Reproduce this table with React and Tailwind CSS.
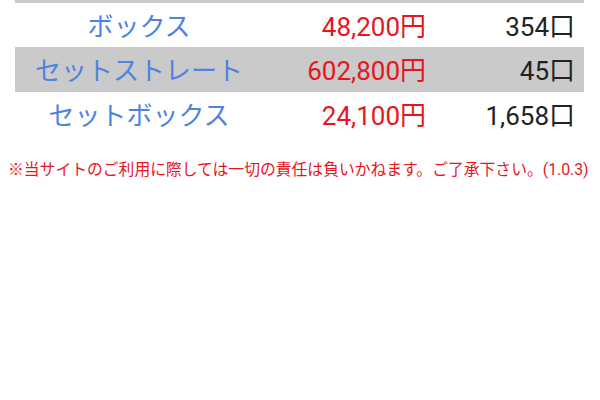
import React from "react";

const rows = [
  { name: "ボックス", price: "48,200円", count: "354口", gray: false },
  { name: "セットストレート", price: "602,800円", count: "45口", gray: true },
  { name: "セットボックス", price: "24,100円", count: "1,658口", gray: false },
];

const App = () => {
  return (
    <div
      className="w-[600px] h-[400px] bg-white overflow-hidden"
      style={{ fontFamily: 'Roboto, "Noto Sans CJK JP", sans-serif' }}
    >
      <div className="px-[15px] pr-[16px]">
        {/* 前の行の端 */}
        <div className="h-[3px] bg-[#cacaca]" />
        {rows.map((r) => (
          <div
            key={r.name}
            className={`flex items-center pt-[3px] text-[26px] leading-none ${
              r.gray ? "bg-[#cacaca] h-[45px]" : "h-[44px]"
            }`}
          >
            <div className="w-[248px] text-center text-[#4d83e3]">
              {r.name}
            </div>
            <div className="w-[163px] text-right text-[#e8141e]">{r.price}</div>
            <div className="flex-1 text-right pr-[9px] text-[#222222]">
              {r.count}
            </div>
          </div>
        ))}
      </div>

      <p className="mt-[26px] pl-[8px] text-[15.8px] leading-none text-[#e8141e] whitespace-nowrap">
        ※当サイトのご利用に際しては一切の責任は負いかねます。ご了承下さい。(1.0.3)
      </p>
    </div>
  );
};

export default App;
